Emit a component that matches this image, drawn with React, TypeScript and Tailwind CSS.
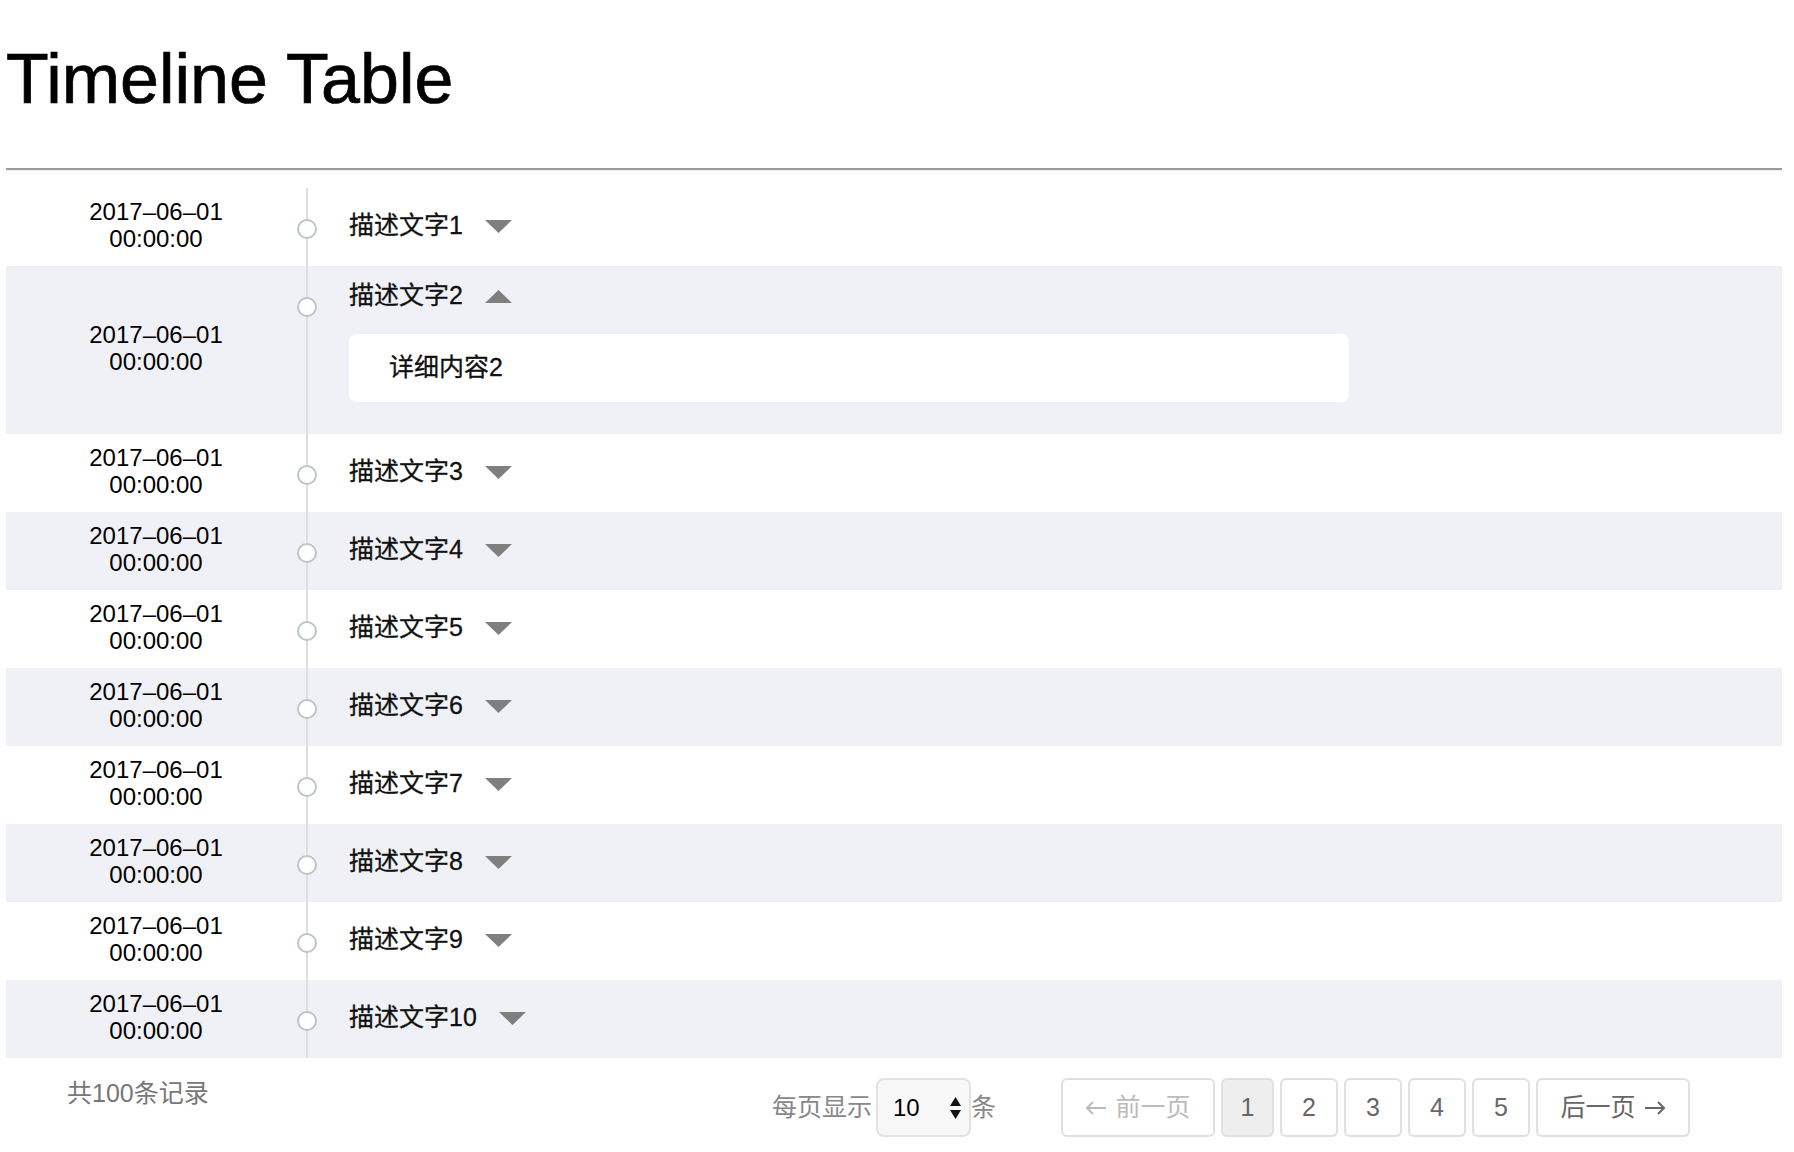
const font = { fontFamily: '"Liberation Sans", "Noto Sans CJK SC", sans-serif' }

type Row = { id: number; open: boolean }

const rows: Row[] = Array.from({ length: 10 }, (_, i) => ({ id: i + 1, open: i === 1 }))

function Caret({ up }: { up?: boolean }) {
  return (
    <svg width="27" height="13" viewBox="0 0 27 13" className="shrink-0">
      {up ? <polygon points="13.5,0 27,13 0,13" fill="#7f7f7f" /> : <polygon points="0,0 27,0 13.5,13" fill="#7f7f7f" />}
    </svg>
  )
}

function Arrow({ left }: { left?: boolean }) {
  return (
    <svg width="22" height="14" viewBox="0 0 22 14" className="shrink-0">
      {left ? (
        <path d="M21 7H2M8 1L2 7l6 6" fill="none" stroke="currentColor" strokeWidth="2" />
      ) : (
        <path d="M1 7h19M14 1l6 6-6 6" fill="none" stroke="currentColor" strokeWidth="2" />
      )}
    </svg>
  )
}

function TimelineRow({ row }: { row: Row }) {
  const striped = row.id % 2 === 0
  return (
    <div className={`flex ${striped ? 'bg-[#f0f1f6]' : 'bg-white'}`}>
      <div className="flex w-[300px] shrink-0 items-center justify-center pb-[4px] text-center text-[24px] leading-[27px] text-black">
        <div>
          2017–06–01
          <br />
          00:00:00
        </div>
      </div>
      <div
        className={`relative flex-1 border-l-2 border-[#dedede] pl-[41px] ${
          row.open ? 'pt-[13px] pb-[32px]' : 'py-[21px]'
        }`}
      >
        <span className="absolute left-[-11px] top-[31px] h-[20px] w-[20px] rounded-full border-2 border-[#bcc6c3] bg-white" />
        <div className="flex h-[36px] items-center gap-[22px] pb-[2px] text-[25px] text-[#111] [-webkit-text-stroke:0.3px_#111]">
          <span>描述文字{row.id}</span>
          <Caret up={row.open} />
        </div>
        {row.open && (
          <div className="mt-[19px] flex h-[68px] w-[1000px] items-center rounded-[8px] bg-white pl-[40px] text-[25px] text-[#111] [-webkit-text-stroke:0.3px_#111]">
            详细内容{row.id}
          </div>
        )}
      </div>
    </div>
  )
}

function PageButton({ children, w, active, muted }: { children: React.ReactNode; w: string; active?: boolean; muted?: boolean }) {
  return (
    <div
      className={`flex h-[59px] items-center justify-center gap-[8px] rounded-[6px] border-2 border-[#e0e0e0] text-[25px] ${w} ${
        active ? 'bg-[#eeeeee]' : 'bg-white'
      } ${muted ? 'text-[#bbbbbb]' : 'text-[#666666]'}`}
    >
      {children}
    </div>
  )
}

export default function App() {
  return (
    <div className="min-h-screen bg-white" style={font}>
      <div className="ml-[6px] w-[1776px] pb-[20px]">
        <h1 className="mt-[44px] text-[70px] font-normal leading-none text-black [-webkit-text-stroke:0.7px_black]">
          Timeline Table
        </h1>
        <div className="mt-[54px] h-[3px] border-t-2 border-b border-t-[#9c9c9c] border-b-[#ededed]" />

        <div className="pt-[17px]">
          {rows.map((r) => (
            <TimelineRow key={r.id} row={r} />
          ))}
        </div>

        <div className="flex items-start">
          <div className="ml-[61px] mt-[17px] text-[25px] leading-[36px] text-[#777777]">共100条记录</div>

          <div className="ml-auto mr-[92px] mt-[20px] flex items-center">
            <span className="text-[25px] text-[#888888]">每页显示</span>
            <div className="ml-[4px] flex h-[59px] w-[95px] items-center justify-between rounded-[8px] border-2 border-[#e2e2e2] bg-[#f8f8f8] pl-[15px] pr-[8px]">
              <span className="text-[24px] text-black">10</span>
              <svg width="11" height="24" viewBox="0 0 11 24">
                <polygon points="5.5,1 11,10 0,10" fill="#111" />
                <polygon points="0,14 11,14 5.5,23" fill="#111" />
              </svg>
            </div>
            <span className="text-[25px] text-[#888888]">条</span>

            <div className="ml-[65px] flex gap-[6px]">
              <PageButton w="w-[154px]" muted>
                <Arrow left />
                <span>前一页</span>
              </PageButton>
              <PageButton w="w-[53px]" active>
                1
              </PageButton>
              <PageButton w="w-[58px]">2</PageButton>
              <PageButton w="w-[58px]">3</PageButton>
              <PageButton w="w-[58px]">4</PageButton>
              <PageButton w="w-[58px]">5</PageButton>
              <PageButton w="w-[154px]">
                <span>后一页</span>
                <Arrow />
              </PageButton>
            </div>
          </div>
        </div>
      </div>
    </div>
  )
}
